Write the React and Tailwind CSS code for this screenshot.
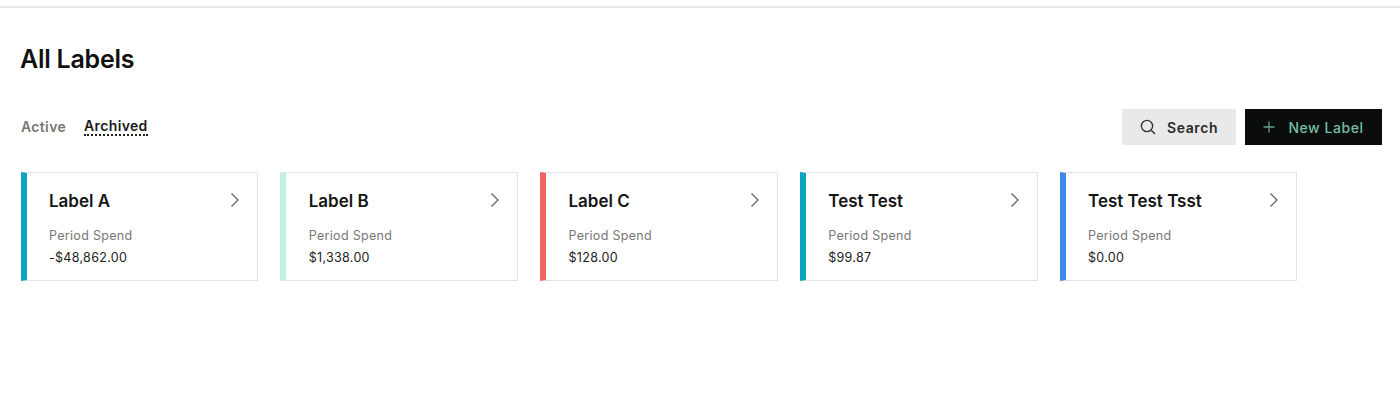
import React from "react";

const cards = [
  { name: "Label A", value: "-$48,862.00", bar: "border-l-[#0ea5c0]" },
  { name: "Label B", value: "$1,338.00", bar: "border-l-[#c3efe2]" },
  { name: "Label C", value: "$128.00", bar: "border-l-[#f26464]" },
  { name: "Test Test", value: "$99.87", bar: "border-l-[#0ea5c0]" },
  { name: "Test Test Tsst", value: "$0.00", bar: "border-l-[#3f8ae8]" },
];

function Chevron() {
  return (
    <svg width="10" height="16" viewBox="0 0 10 16" fill="none" stroke="#666" strokeWidth="1.3" className="mt-px">
      <path d="M1.5 1.5 L8 8 L1.5 14.5" />
    </svg>
  );
}

function Card({ name, value, bar }) {
  return (
    <div className={`w-[237.75px] h-[109px] border border-[#e4e4e4] border-l-[6px] ${bar} pl-[22.5px] pr-[17px] pt-[18px]`}>
      <div className="flex items-start justify-between">
        <div className="text-[17px] leading-[21px] font-semibold text-[#151515]">{name}</div>
        <Chevron />
      </div>
      <div className="mt-[16px] text-[12.5px] leading-[16px] text-[#777] tracking-[0.3px]">Period Spend</div>
      <div className="mt-[6px] text-[12.5px] leading-[16px] text-[#222] tracking-[0.3px]">{value}</div>
    </div>
  );
}

export default function App() {
  return (
    <div className="w-[1400px] h-[410px] bg-white overflow-hidden font-['Inter',sans-serif]">
      <div className="mt-[6px] h-[2px] bg-[#e9e9e9]" />
      <div className="pl-[20px] pr-[18px] pt-[35px]">
        <h1 className="text-[25px] leading-[32px] font-semibold text-[#111] tracking-[-0.25px]">All Labels</h1>
        <div className="mt-[34px] flex items-center justify-between">
          <div className="flex items-center gap-[18px] pl-px text-[14px] font-semibold leading-[18px] tracking-[0.35px]">
            <span className="text-[#777]">Active</span>
            <span className="text-[#1a1a1a] border-b-2 border-dotted border-[#222] leading-[16px]">Archived</span>
          </div>
          <div className="flex items-center gap-[9px]">
            <button className="w-[114px] h-[36px] bg-[#e9e9e9] flex items-center justify-center gap-[11px] text-[14px] font-semibold text-[#2a2a2a] tracking-[0.6px]">
              <svg width="16" height="16" viewBox="0 0 16 16" fill="none" stroke="#333" strokeWidth="1.4">
                <circle cx="7" cy="7" r="5.6" />
                <path d="M11.2 11.2 L15 15" />
              </svg>
              Search
            </button>
            <button className="w-[137px] h-[36px] bg-[#0a0d0c] flex items-center justify-center gap-[13px] text-[14px] font-medium text-[#74bda5] tracking-[0.55px]">
              <svg width="12" height="12" viewBox="0 0 12 12" fill="none" stroke="#5f9f8a" strokeWidth="1.3">
                <path d="M6 0.5 V11.5 M0.5 6 H11.5" />
              </svg>
              New Label
            </button>
          </div>
        </div>
        <div className="mt-[27px] ml-[0.5px] flex gap-[22px]">
          {cards.map((c) => (
            <Card key={c.name} {...c} />
          ))}
        </div>
      </div>
    </div>
  );
}
